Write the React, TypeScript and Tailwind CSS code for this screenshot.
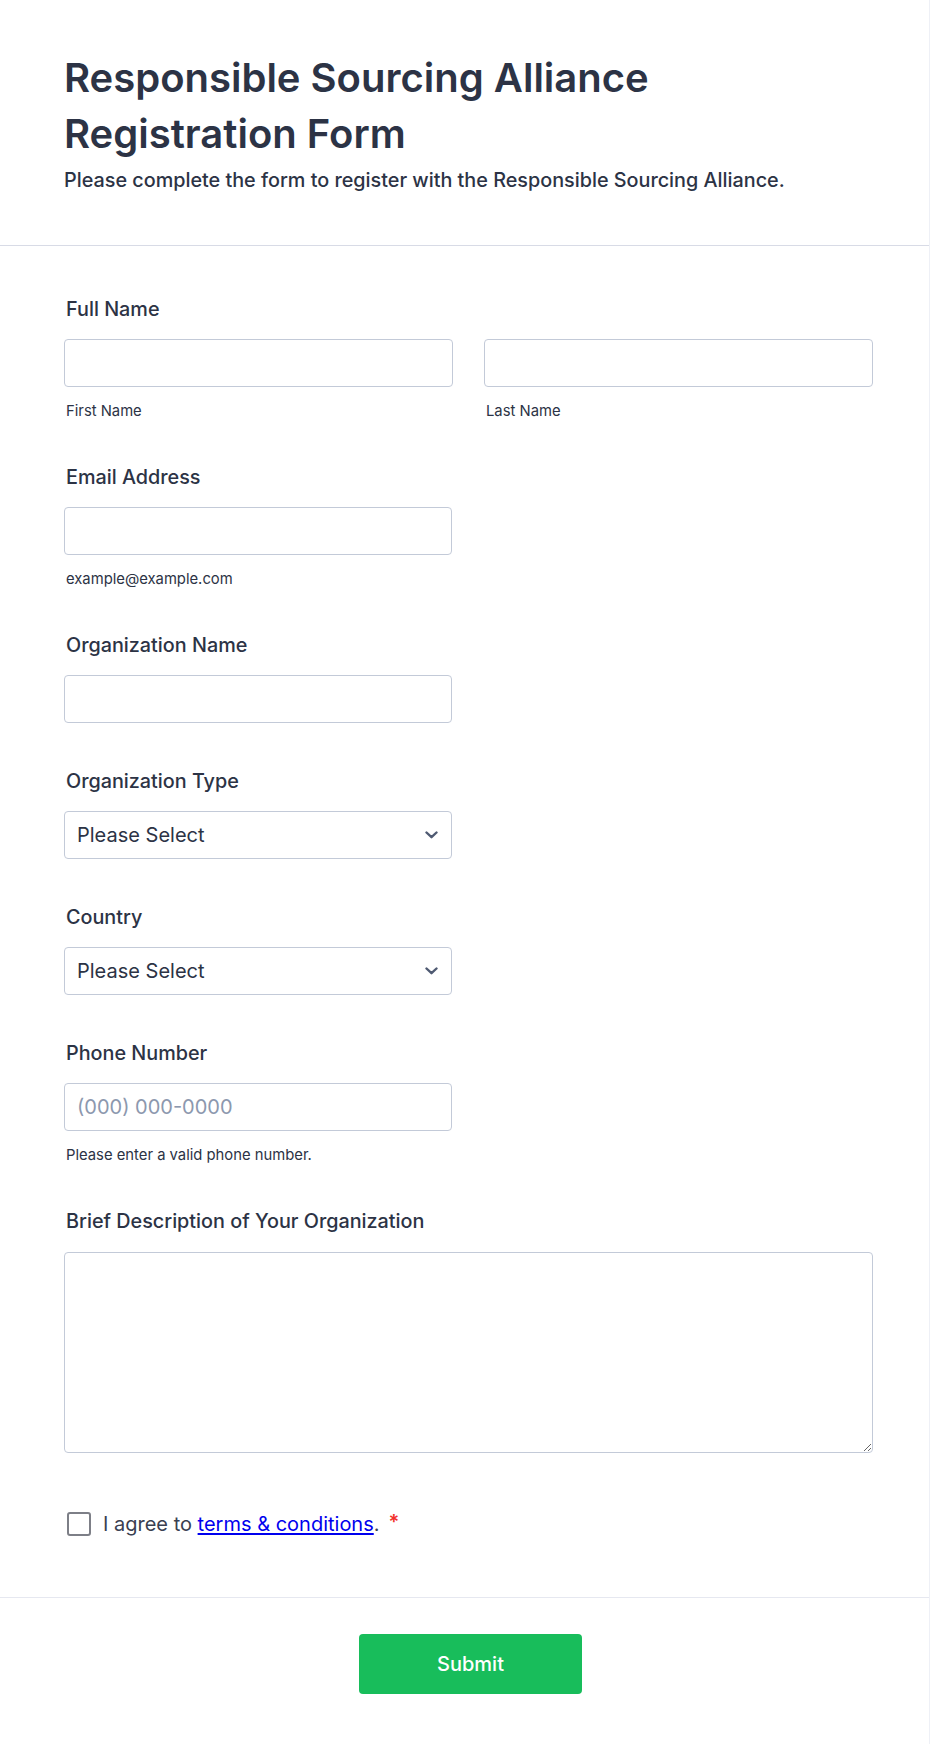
import type { ReactNode } from "react";

const inputBase =
  "block h-12 rounded-[4px] border border-[#c3cad8] bg-white px-3 text-[20px] text-[#2c3345] outline-none placeholder:text-[#8c98ae]";

function Label({ children }: { children: ReactNode }) {
  return (
    <label className="mb-[18px] block pl-[2px] text-[19.8px] leading-6 font-medium text-[#2c3345]">
      {children}
    </label>
  );
}

function Sublabel({ children }: { children: ReactNode }) {
  return (
    <p className="mt-[14px] pl-[2px] text-[14.8px] leading-5 text-[#2c3345]">{children}</p>
  );
}

function SelectBox() {
  return (
    <div className="relative w-[388px]">
      <select
        defaultValue=""
        className={`${inputBase} w-full appearance-none`}
      >
        <option value="">Please Select</option>
      </select>
      <svg
        className="pointer-events-none absolute top-1/2 right-[14px] -translate-y-1/2"
        width="13"
        height="8"
        viewBox="0 0 13 8"
        fill="none"
      >
        <path
          d="M1.5 1.5 6.5 6.2 11.5 1.5"
          stroke="#4f5a72"
          strokeWidth="2.4"
          strokeLinecap="round"
          strokeLinejoin="round"
        />
      </svg>
    </div>
  );
}

export default function App() {
  return (
    <div className="min-h-[1744px] w-full border-r border-b border-[#eef0f6] bg-white font-['Inter','Noto_Sans',sans-serif] text-[#2c3345]">
      <header className="border-b border-[#d8dbe6] pt-[50px] pr-14 pb-[53px] pl-16">
        <h1 className="text-[40px] leading-[56px] font-semibold text-[#2c3345]">
          Responsible Sourcing Alliance
          <br />
          Registration Form
        </h1>
        <p className="mt-[6px] text-[19.8px] leading-6 font-medium text-[#2c3345]">
          Please complete the form to register with the Responsible Sourcing Alliance.
        </p>
      </header>

      <form className="border-b border-[#e6e8f0] pt-[51px] pr-14 pb-[61px] pl-16">
        <div>
          <Label>Full Name</Label>
          <div className="grid grid-cols-2 gap-[31px]">
            <div>
              <input type="text" className={`${inputBase} w-full`} />
              <Sublabel>First Name</Sublabel>
            </div>
            <div>
              <input type="text" className={`${inputBase} w-full`} />
              <Sublabel>Last Name</Sublabel>
            </div>
          </div>
        </div>

        <div className="mt-[44px]">
          <Label>Email Address</Label>
          <input type="email" className={`${inputBase} w-[388px]`} />
          <Sublabel>example@example.com</Sublabel>
        </div>

        <div className="mt-[44px]">
          <Label>Organization Name</Label>
          <input type="text" className={`${inputBase} w-[388px]`} />
        </div>

        <div className="mt-[46px]">
          <Label>Organization Type</Label>
          <SelectBox />
        </div>

        <div className="mt-[46px]">
          <Label>Country</Label>
          <SelectBox />
        </div>

        <div className="mt-[46px]">
          <Label>Phone Number</Label>
          <input
            type="tel"
            placeholder="(000) 000-0000"
            className={`${inputBase} w-[388px]`}
          />
          <Sublabel>Please enter a valid phone number.</Sublabel>
        </div>

        <div className="mt-[44px]">
          <label className="mb-[19px] block pl-[2px] text-[19.8px] leading-6 font-medium text-[#2c3345]">
            Brief Description of Your Organization
          </label>
          <textarea className="block h-[201px] w-full rounded-[4px] border border-[#c3cad8] bg-white px-3 py-2 text-[18px] outline-none" />
        </div>

        <div className="mt-[59px] flex items-center pl-[3px]">
          <input
            type="checkbox"
            className="h-6 w-6 appearance-none rounded-[3px] border-2 border-[#7d7f87] bg-white"
          />
          <span className="ml-3 text-[20px] leading-6 text-[#3a4051]">
            I agree to{" "}
            <a href="#" className="text-[#0000ee] underline underline-offset-2">
              terms &amp; conditions
            </a>
            .
          </span>
          <span className="ml-[9px] self-start text-[20px] leading-5 font-semibold text-[#f2312c]">
            *
          </span>
        </div>
      </form>

      <div className="flex justify-center pt-[36px] pr-14 pb-[50px] pl-[68px]">
        <button
          type="button"
          className="h-[60px] w-[223px] rounded-[4px] bg-[#18bd5b] text-[20px] font-medium text-white"
        >
          Submit
        </button>
      </div>
    </div>
  );
}
